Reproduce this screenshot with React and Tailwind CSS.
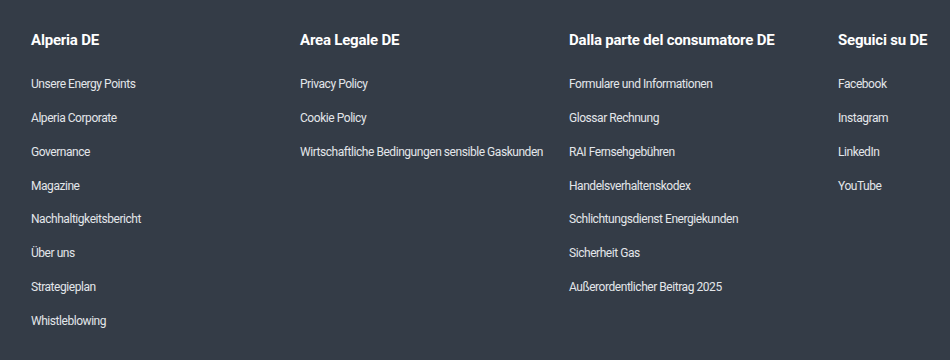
const columns = [
  {
    title: 'Alperia DE',
    links: [
      'Unsere Energy Points',
      'Alperia Corporate',
      'Governance',
      'Magazine',
      'Nachhaltigkeitsbericht',
      'Über uns',
      'Strategieplan',
      'Whistleblowing',
    ],
  },
  {
    title: 'Area Legale DE',
    links: ['Privacy Policy', 'Cookie Policy', 'Wirtschaftliche Bedingungen sensible Gaskunden'],
  },
  {
    title: 'Dalla parte del consumatore DE',
    links: [
      'Formulare und Informationen',
      'Glossar Rechnung',
      'RAI Fernsehgebühren',
      'Handelsverhaltenskodex',
      'Schlichtungsdienst Energiekunden',
      'Sicherheit Gas',
      'Außerordentlicher Beitrag 2025',
    ],
  },
  {
    title: 'Seguici su DE',
    links: ['Facebook', 'Instagram', 'LinkedIn', 'YouTube'],
  },
];

export default function App() {
  return (
    <footer className="w-[950px] h-[360px] overflow-hidden bg-[#343c47] text-[#e3e6ea] font-['Roboto',sans-serif]">
      <div className="grid grid-cols-[269px_269px_269px_1fr] pl-[31px] pt-[29px]">
        {columns.map((col) => (
          <div key={col.title} className="flex flex-col">
            <h3 className="text-[15px] leading-[22px] font-bold text-white whitespace-nowrap tracking-[-0.2px]">{col.title}</h3>
            <ul className="mt-[25px] flex flex-col gap-[16.85px]">
              {col.links.map((l) => (
                <li key={l} className="text-[12px] leading-[17px] whitespace-nowrap tracking-[-0.45px]">
                  <a href="#">{l}</a>
                </li>
              ))}
            </ul>
          </div>
        ))}
      </div>
    </footer>
  );
}
